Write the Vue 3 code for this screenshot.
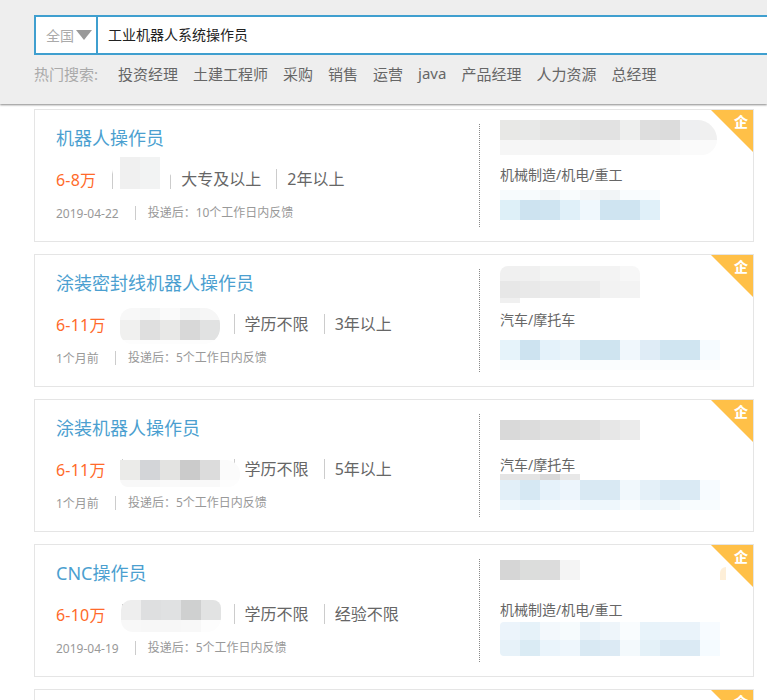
<script setup>
const g = (h, ...cells) => ({ h, cells })
const W = '#ffffff'

const jobs = [
  {
    title: '机器人操作员',
    salary: '6-8万',
    cityWidth: 33,
    edu: '大专及以上',
    exp: '2年以上',
    date: '2019-04-22',
    feedback: '投递后：10个工作日内反馈',
    industry: '机械制造/机电/重工',
    blurs: [
      { x: 77, y: 47, radius: '0 0 12px 12px', rows: [g(24, W, W, W)] },
      { x: 85, y: 47, rows: [g(32, '#f0f0f0', '#f2f3f3')] },
      { x: 465, y: 10, radius: '0 20px 16px 0', width: 217, rows: [
        g(20, '#e8e8e6', '#e8e9e8', '#e4e4e3', '#e4e5e4', '#e2e2e2', '#e2e2e2', '#eeefee', '#dedede', '#dcdcdc', '#eeeff1', '#f0f0f0'),
        g(15, '#f6f6f6', '#f6f6f6', '#f5f5f5', '#f5f5f5', '#f4f4f4', '#f4f4f4', '#f6f6f6', '#f6f6f6', '#f8f8f8', '#fafafa', '#fafafa')
      ] },
      { x: 465, y: 80, rows: [
        g(10, '#f7fbfd', '#f7fbfd', '#f3f7f9', '#f9fcfd', '#f4f7f9', '#f1f4f6', '#f9fcfe', '#f9fcfe'),
        g(20, '#def0f8', '#cde3f0', '#cfe4f1', '#e0f0f9', '#f0f8fd', '#cfe4f1', '#cfe4f1', '#e0f0f9')
      ] }
    ]
  },
  {
    title: '涂装密封线机器人操作员',
    salary: '6-11万',
    cityWidth: 87,
    edu: '学历不限',
    exp: '3年以上',
    date: '1个月前',
    feedback: '投递后：5个工作日内反馈',
    industry: '汽车/摩托车',
    blurs: [
      { x: 85, y: 53, radius: '12px 16px 16px 12px', rows: [
        g(12, '#f8f8f8', '#f5f6f6', '#fafafa', '#f3f4f4', '#f6f6f6'),
        g(20, '#f0f0ef', '#dfdfdf', '#e8e8e7', '#d8d8d8', '#e1e2e2'),
        g(4, '#fdfdfd', '#fdfdfd', '#fdfdfd', '#fdfdfd', '#fdfdfd')
      ] },
      { x: 465, y: 11, radius: '8px 8px 0 0', rows: [
        g(15, '#f0f0f0', '#f0f0f0', '#f3f4f3', '#f3f4f3', '#f3f3f3', '#f3f3f3', '#f7f7f7'),
        g(17, '#e7e7e7', '#e9e9e9', '#ebebeb', '#ebebeb', '#ececec', '#f2f2f2', '#f3f3f3'),
        g(5, '#f0f0f0', W, W, W, W, W, W)
      ] },
      { x: 465, y: 85, rows: [
        g(20, '#e6f3fa', '#cde3f0', '#e4f2fa', '#eaf4fa', '#cfe4f0', '#cfe4f0', '#f0f7fc', '#dfecf6', '#d0e5f1', '#d0e5f1', '#f6fbff', '#fff', '#fefefe'),
        g(10, '#fafdfe', '#fafdfe', '#fafdfe', '#fafdfe', '#fafdfe', '#fafdfe', '#fbfdfe', '#fbfdfe', '#fbfdfe', '#fbfdfe', '#fbfdfe', '#fff', '#fefefe')
      ] }
    ]
  },
  {
    title: '涂装机器人操作员',
    salary: '6-11万',
    cityWidth: 87,
    edu: '学历不限',
    exp: '5年以上',
    date: '1个月前',
    feedback: '投递后：5个工作日内反馈',
    industry: '汽车/摩托车',
    blurs: [
      { x: 85, y: 60, radius: '0 14px 12px 8px', rows: [
        g(20, '#ebebe9', '#d3d5d8', '#e3e3e1', '#cbcbcb', '#dcdcdc', '#fbfbfb'),
        g(7, '#f8f8f8', '#f8f8f8', '#fafafa', '#f9f9f9', '#f9f9f9', '#fdfdfd')
      ] },
      { x: 465, y: 20, rows: [
        g(20, '#d9d9d9', '#dcdcdc', '#e0e0e0', '#e0e0df', '#e1e1e1', '#e7e7e7', '#ebebeb')
      ] },
      { x: 465, y: 74, rows: [
        g(6, '#e4e4e4', '#e4e4e4', '#d9d9d9', '#e8e8e8')
      ] },
      { x: 465, y: 80, rows: [
        g(20, '#e2eff8', '#d6e8f3', '#e6f2fa', '#edf5fc', '#d9e9f3', '#d9e9f3', '#f1f8fc', '#e4f0f8', '#daeaf4', '#daeaf4', '#f7fbff'),
        g(10, '#eef7fc', '#e9f4fb', '#eef7fc', '#f2f8fd', '#eef7fc', '#eef7fc', '#f7fbfe', '#eff7fb', '#f1f8fb', '#f8fcfe', '#f8fcfe')
      ] }
    ]
  },
  {
    title: 'CNC操作员',
    salary: '6-10万',
    cityWidth: 87,
    edu: '学历不限',
    exp: '经验不限',
    date: '2019-04-19',
    feedback: '投递后：5个工作日内反馈',
    industry: '机械制造/机电/重工',
    blurs: [
      { x: 86, y: 55, radius: '10px 8px 14px 12px', rows: [
        g(20, '#eeeeee', '#dedfe0', '#e0e1e2', '#cfd0d0', '#e2e3e3'),
        g(12, '#f8f8f8', '#f7f7f7', '#f7f7f7', '#f8f8f8', '#fdfdfd')
      ] },
      { x: 465, y: 15, rows: [
        g(20, '#d6d6d6', '#dcdddc', '#dcdcdc', '#f4f4f4')
      ] },
      { x: 685, y: 22, width: 6, radius: '6px 0 0 0', rows: [g(13, '#feefd8')] },
      { x: 465, y: 77, radius: '4px 0 0 4px', rows: [
        g(18, '#ecf4fb', '#e6f2f9', '#f3f8fc', '#f6fbfd', '#e8f2f9', '#eef5fa', '#f9fcfe', '#e8f3fa', '#eaf3fa', '#eaf3fa', '#f7fbff'),
        g(16, '#e7f2f9', '#daebf4', '#eaf4fb', '#eef6fc', '#d9e9f3', '#dceaf4', '#f3f9fc', '#e4f1f8', '#dbeaf4', '#dbeaf4', '#f5fbff')
      ] }
    ]
  },
  {
    title: '',
    salary: '',
    cityWidth: 87,
    edu: '',
    exp: '',
    date: '',
    feedback: '',
    industry: '',
    blurs: []
  }
]

const hot = ['投资经理', '土建工程师', '采购', '销售', '运营', 'java', '产品经理', '人力资源', '总经理']
</script>

<template>
  <div class="page">
    <header class="top">
      <div class="search">
        <div class="city">
          <span>全国</span>
          <i class="caret"></i>
        </div>
        <div class="query">工业机器人系统操作员</div>
      </div>
      <div class="hot">
        <span class="hot-label">热门搜索:</span>
        <a v-for="h in hot" :key="h" class="hot-item">{{ h }}</a>
      </div>
    </header>

    <main class="list">
      <article v-for="(job, i) in jobs" :key="i" class="card">
        <div class="left">
          <h3 class="title">{{ job.title }}</h3>
          <div class="specs">
            <span class="salary">{{ job.salary }}</span>
            <span class="spec city-name" :style="{ width: job.cityWidth + 25 + 'px' }"></span>
            <span class="spec">{{ job.edu }}</span>
            <span class="spec">{{ job.exp }}</span>
          </div>
          <div class="meta">
            <span class="date">{{ job.date }}</span>
            <span class="feedback">{{ job.feedback }}</span>
          </div>
        </div>
        <div class="right">
          <div class="industry">{{ job.industry }}</div>
        </div>
        <div class="badge"><span>企</span></div>
        <div
          v-for="(b, k) in job.blurs"
          :key="k"
          class="blur"
          :style="{ left: b.x + 'px', top: b.y + 'px', width: b.width ? b.width + 'px' : null, borderRadius: b.radius || '0' }"
        >
          <div v-for="(r, n) in b.rows" :key="n" class="blur-row" :style="{ height: r.h + 'px' }">
            <i v-for="(c, m) in r.cells" :key="m" :style="{ background: c }"></i>
          </div>
        </div>
      </article>
    </main>
  </div>
</template>

<style scoped>
.page {
  height: 700px;
  overflow: hidden;
  background: #fff;
  font-family: "Noto Sans", "Noto Sans CJK SC", sans-serif;
}
.top {
  height: 104px;
  box-sizing: border-box;
  padding: 15px 0 0 34px;
  background: #eeeeee;
  box-shadow: 0 1px 2px #888;
  position: relative;
  z-index: 2;
}
.search {
  display: flex;
  height: 40px;
  box-sizing: border-box;
  border: 2px solid #3f9fcf;
  border-right: 0;
  background: #fff;
}
.city {
  width: 50px;
  box-sizing: content-box;
  display: flex;
  align-items: center;
  padding-left: 10px;
  border-right: 2px solid #3f9fcf;
  font-size: 14px;
  color: #aaa;
  gap: 2px;
}
.caret {
  width: 0;
  height: 0;
  border-left: 8px solid transparent;
  border-right: 8px solid transparent;
  border-top: 10px solid #999;
}
.query {
  padding-left: 10px;
  line-height: 35px;
  font-size: 14px;
  color: #222;
}
.hot {
  display: flex;
  align-items: center;
  height: 24px;
  margin-top: 6px;
  white-space: nowrap;
}
.hot-label {
  font-size: 15px;
  color: #aaa;
  width: 84px;
}
.hot-item {
  font-size: 15px;
  color: #666;
  margin-right: 15px;
}
.list {
  padding: 5px 13px 0 34px;
  display: flex;
  flex-direction: column;
  gap: 12px;
}
.card {
  position: relative;
  flex: 0 0 133px;
  box-sizing: border-box;
  height: 133px;
  border: 1px solid #e5e5e5;
  display: flex;
  overflow: hidden;
}
.left {
  flex: 0 0 444px;
  box-sizing: border-box;
  padding: 14px 0 0 21px;
}
.title {
  margin: 0;
  height: 28px;
  font-size: 18px;
  line-height: 28px;
  font-weight: 400;
  color: #4b9fd0;
}
.specs {
  display: flex;
  align-items: center;
  height: 20px;
  margin-top: 17px;
  white-space: nowrap;
}
.salary {
  font-size: 16px;
  letter-spacing: 0.2px;
  color: #ff6a2a;
  margin-right: 16px;
}
.spec {
  box-sizing: border-box;
  height: 20px;
  line-height: 20px;
  padding: 0 15px 0 10px;
  border-left: 1px solid #ccc;
  font-size: 16px;
  color: #666;
}
.city-name {
  flex: none;
}
.meta {
  display: flex;
  align-items: center;
  height: 14px;
  margin-top: 17px;
  white-space: nowrap;
  font-size: 12px;
  color: #999;
}
.date {
  padding-right: 16px;
}
.feedback {
  border-left: 1px solid #ccc;
  padding-left: 12px;
  line-height: 14px;
}
.right {
  flex: 1;
  align-self: flex-start;
  box-sizing: border-box;
  height: 103px;
  margin-top: 14px;
  padding: 41px 0 0 20px;
  border-left: 1px dotted #888;
}
.industry {
  font-size: 14px;
  line-height: 20px;
  color: #666;
}
.badge {
  position: absolute;
  top: 0;
  right: 0;
  width: 42px;
  height: 42px;
  background: #ffc048;
  clip-path: polygon(0 0, 100% 0, 100% 100%);
}
.badge span {
  position: absolute;
  top: 2px;
  right: 5px;
  font-family: "Noto Sans CJK SC", sans-serif;
  font-size: 14px;
  line-height: 18px;
  font-weight: 900;
  color: #fff;
}
.blur {
  position: absolute;
  overflow: hidden;
}
.blur-row {
  display: flex;
}
.blur-row i {
  display: block;
  flex: 0 0 20px;
}
</style>
